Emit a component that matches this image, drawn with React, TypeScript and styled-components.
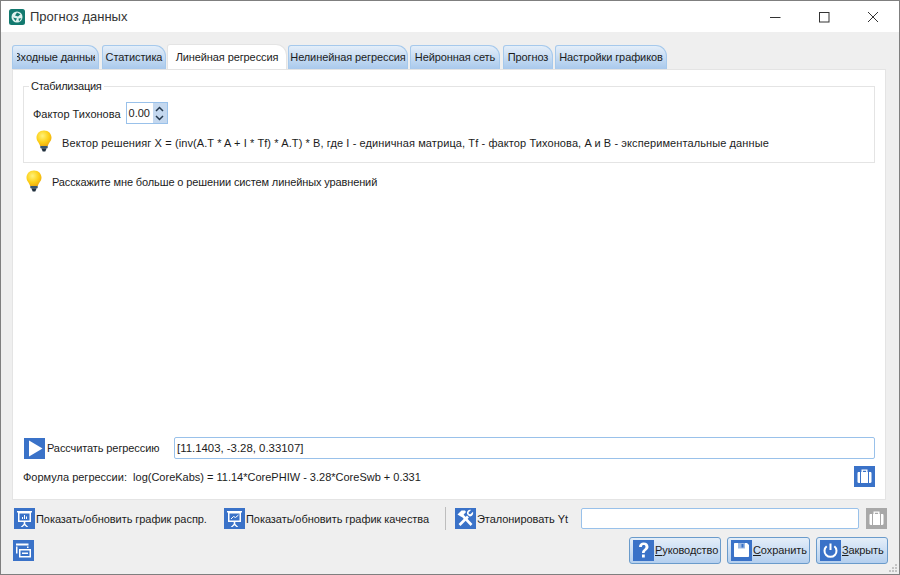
import styled, { createGlobalStyle } from 'styled-components';
import type { ReactNode } from 'react';

const GlobalStyle = createGlobalStyle`
  html, body {
    margin: 0;
    padding: 0;
    width: 900px;
    height: 575px;
    overflow: hidden;
  }
  * {
    box-sizing: border-box;
  }
`;

const tabs = [
  { text: 'Входные данные', width: 87, gap: 3, indent: -3, clip: true },
  { text: 'Статистика', width: 64, gap: 1 },
  { text: 'Линейная регрессия', width: 120, gap: 1, active: true },
  { text: 'Нелинейная регрессия', width: 120, gap: 2 },
  { text: 'Нейронная сеть', width: 90, gap: 3 },
  { text: 'Прогноз', width: 50, gap: 2 },
  { text: 'Настройки графиков', width: 112, gap: 0 },
];

function Bulb() {
  return (
    <svg width="18" height="22" viewBox="0 0 18 22">
      <defs>
        <radialGradient id="bulbFill" cx="0.4" cy="0.35" r="0.7">
          <stop offset="0" stopColor="#fff27a" />
          <stop offset="0.6" stopColor="#fdd017" />
          <stop offset="1" stopColor="#eda90c" />
        </radialGradient>
      </defs>
      <path d="M9 0.5C4.3 0.5 1.5 3.8 1.5 7.6c0 3.6 2.8 5.2 3.6 8.4h7.8c.8-3.2 3.6-4.8 3.6-8.4C16.5 3.8 13.700 0.5 9 0.5z" fill="url(#bulbFill)" />
      <path d="M5.300 16h7.400v2.200H5.300z" fill="#39556a" />
      <path d="M6.300 18.200h5.400L10.300 21.500H7.700z" fill="#1f2f3d" />
    </svg>
  );
}

function Tile({ children, gray }: { children: ReactNode; gray?: boolean }) {
  return (
    <IconTile $gray={gray}>
      <svg width="21" height="21" viewBox="0 0 21 21">
        {children}
      </svg>
    </IconTile>
  );
}

const Board = ({ inner }: { inner: ReactNode }) => (
  <Tile>
    <path d="M3 3h15v1.500h-1v9.500H4V4.500H3z" fill="#fff" />
    <path d="M5.500 5.500h10v7h-10z" fill="#3a72c8" />
    {inner}
    <path d="M9.700 14h1.600v2l3 3h-1.800l-2-1.800-2 1.800H6.700l3-3z" fill="#fff" />
  </Tile>
);

const Case = ({ gray }: { gray?: boolean }) => (
  <Tile gray={gray}>
    <path d="M7.500 6V3.500h6V6h-1.400V4.800H8.900V6z" fill="#fff" />
    <path d="M3.500 7.200c0-.7.500-1.200 1.200-1.200H6v11H4.700c-.7 0-1.200-.5-1.200-1.200zM7 6h7v11H7zM15 6h1.300c.7 0 1.200.5 1.200 1.200v8.600c0 .7-.5 1.200-1.200 1.200H15z" fill="#fff" />
  </Tile>
);

export default function App() {
  return (
    <Window>
      <GlobalStyle />
      <TitleBar>
        <AppLogo>
          <svg width="16" height="16" viewBox="0 0 16 16">
            <rect width="16" height="16" rx="2.500" fill="#12796f" />
            <circle cx="8" cy="8" r="5.500" fill="#dff2ee" />
            <path d="M8 3.500 6 6.500l3 1 2.500-2.200zM4 8.500l2.500 3.500 1.500-2.500zM9.500 9.500l.5 3 2.500-3.300z" fill="#12796f" />
          </svg>
        </AppLogo>
        <WindowTitle>Прогноз данных</WindowTitle>
        <WindowControls>
          <ControlSlot>
            <svg width="12" height="12" viewBox="0 0 12 12"><path d="M1 6.500h10.500" stroke="#333" fill="none" /></svg>
          </ControlSlot>
          <ControlSlot>
            <svg width="12" height="12" viewBox="0 0 12 12"><rect x="1.500" y="1.500" width="9.500" height="9.500" stroke="#333" fill="none" /></svg>
          </ControlSlot>
          <ControlSlot>
            <svg width="12" height="12" viewBox="0 0 12 12"><path d="M1 1l10 10M11 1 1 11" stroke="#333" fill="none" /></svg>
          </ControlSlot>
        </WindowControls>
      </TitleBar>

      <Body>
        <TabBar>
          {tabs.map((tab) => (
            <Tab key={tab.text} $width={tab.width} $gap={tab.gap} $active={tab.active}>
              <TabLabel $clip={tab.clip} $indent={tab.indent}>{tab.text}</TabLabel>
            </Tab>
          ))}
        </TabBar>

        <Pane>
          <GroupBox>
            <GroupTitle>Стабилизация</GroupTitle>
            <FactorRow>
              <FieldLabel>Фактор Тихонова</FieldLabel>
              <SpinBox>
                <SpinValue>0.00</SpinValue>
                <SpinButtons>
                  <svg width="9" height="6" viewBox="0 0 9 6"><path d="M1 5l3.500-3.500L8 5" stroke="#24384d" strokeWidth="1.500" fill="none" /></svg>
                  <svg width="9" height="6" viewBox="0 0 9 6"><path d="M1 1l3.500 3.500L8 1" stroke="#24384d" strokeWidth="1.500" fill="none" /></svg>
                </SpinButtons>
              </SpinBox>
            </FactorRow>
            <GroupHint>
              <Bulb />
              <VectorText>Вектор решенияг X = (inv(A.T * A + I * Tf) * A.T) * B, где I - единичная матрица, Tf - фактор Тихонова, A и B - экспериментальные данные</VectorText>
            </GroupHint>
          </GroupBox>

          <PaneHint>
            <Bulb />
            <PaneHintText>Расскажите мне больше о решении систем линейных уравнений</PaneHintText>
          </PaneHint>

          <RegressionRow>
            <Tile>
              <path d="M5 2.500 18.500 10.500 5 18.500z" fill="#fff" />
            </Tile>
            <RegressionLabel>Рассчитать регрессию</RegressionLabel>
            <TextField $height={22} defaultValue="[11.1403, -3.28, 0.33107]" />
          </RegressionRow>

          <FormulaRow>
            <span>Формула регрессии:&nbsp; log(CoreKabs) = 11.14*CorePHIW - 3.28*CoreSwb + 0.331</span>
            <Case />
          </FormulaRow>
        </Pane>

        <ActionRow>
          <ActionItem $width={210}>
            <Board inner={<path d="M8 11V9h1v2zM10 11V7h1v4zM12 11V8.500h1V11z" fill="#fff" />} />
            <ActionText>Показать/обновить график распр.</ActionText>
          </ActionItem>
          <ActionItem $width={221}>
            <Board inner={<path d="M7 11l2.500-2.500 2 1L14.500 7" stroke="#fff" fill="none" />} />
            <ActionText>Показать/обновить график качества</ActionText>
          </ActionItem>
          <Separator />
          <ActionItem $width={126}>
            <Tile>
              <path d="M6.500 6.500 16.500 17" stroke="#fff" strokeWidth="2.600" fill="none" />
              <path d="M2.500 6.500 6.500 2.500h3.500l1 1.500-4.500 5z" fill="#fff" />
              <path d="M4.500 17 13 8.500" stroke="#fff" strokeWidth="2.600" fill="none" />
              <path d="M18 3.800l-2.600 2.500-1.500-.4-.4-1.500 2.500-2.500c-2.500-.6-4.600 1.500-4 4.200l2.200 2.200c2.700.6 4.500-1.700 3.800-4.500z" fill="#fff" />
            </Tile>
            <ActionText>Эталонировать Yt</ActionText>
          </ActionItem>
          <TextField $height={21} />
          <GrayCaseSlot>
            <Case gray />
          </GrayCaseSlot>
        </ActionRow>

        <FooterRow>
          <Tile>
            <path d="M3 3.500h12.500v2H3zM3 6.500h1.500v7H3zM14 6.500h1.500v1.500H14z" fill="#fff" />
            <path d="M6 9h12v8.500H6z" fill="#fff" />
            <path d="M7.500 10.500h9v5.500h-9z" fill="#3a72c8" />
            <path d="M9 12.500h6v1.500H9z" fill="#fff" />
          </Tile>
          <FooterButtons>
            <PushButton $width={92} $gap={6}>
              <Tile>
                <path d="M6 7c0-3 2-4.500 4.700-4.500S15.500 4 15.500 6.700c0 3.500-3.800 3.500-3.800 6.300H9c0-3.700 3.500-3.700 3.500-6.200 0-1-.7-1.700-1.800-1.700S8.900 5.700 8.900 7zM9 14.500h2.800v3H9z" fill="#fff" />
              </Tile>
              <ButtonText><u>Р</u>уководство</ButtonText>
            </PushButton>
            <PushButton $width={83} $gap={6}>
              <Tile>
                <path d="M3 4c0-.6.400-1 1-1h12l2 2v11c0 .6-.4 1-1 1H4c-.6 0-1-.4-1-1z" fill="#fff" />
                <path d="M7 3h7v5.500H7z" fill="#9cb9e4" />
                <path d="M10.500 4h2v3.500h-2z" fill="#3a72c8" />
              </Tile>
              <ButtonText><u>С</u>охранить</ButtonText>
            </PushButton>
            <PushButton $width={72} $gap={0}>
              <Tile>
                <path d="M6.700 6.200a6 6 0 1 0 7.600 0" stroke="#fff" strokeWidth="2" fill="none" />
                <path d="M10.500 3.500v6.500" stroke="#fff" strokeWidth="2" fill="none" />
              </Tile>
              <ButtonText><u>З</u>акрыть</ButtonText>
            </PushButton>
          </FooterButtons>
        </FooterRow>

        <SizeGrip>
          <svg width="10" height="10" viewBox="0 0 10 10">
            <path d="M7 0h2v2H7zM4 3h2v2H4zM7 3h2v2H7zM1 6h2v2H1zM4 6h2v2H4zM7 6h2v2H7z" fill="#c4c4c4" />
          </svg>
        </SizeGrip>
      </Body>
    </Window>
  );
}

const Window = styled.div`
  display: flex;
  flex-direction: column;
  width: 900px;
  height: 575px;
  border: 1px solid #7f7f7f;
  background: #efefef;
  font-family: 'Liberation Sans', Arial, sans-serif;
  font-size: 11px;
  color: #1c1c1c;
`;

const TitleBar = styled.div`
  display: flex;
  align-items: center;
  flex: none;
  height: 31px;
  padding-left: 8px;
  background: #fff;
`;

const AppLogo = styled.div`
  display: flex;
  margin-right: 5px;
`;

const WindowTitle = styled.span`
  font-size: 13px;
  color: #333;
`;

const WindowControls = styled.div`
  display: flex;
  margin-left: auto;
  margin-right: 2px;
`;

const ControlSlot = styled.div`
  display: flex;
  align-items: center;
  justify-content: center;
  width: 49px;
  height: 31px;
`;

const Body = styled.div`
  position: relative;
  display: flex;
  flex-direction: column;
  flex: 1;
  min-height: 0;
  padding: 12px 11px 0;
`;

const TabBar = styled.div`
  display: flex;
  align-items: flex-end;
  flex: none;
  height: 25px;
`;

const Tab = styled.div<{ $width: number; $gap: number; $active?: boolean }>`
  display: flex;
  align-items: center;
  justify-content: center;
  flex: none;
  width: ${(p) => p.$width}px;
  height: ${(p) => (p.$active ? 25 : 24)}px;
  margin-right: ${(p) => p.$gap}px;
  padding-bottom: 1px;
  border: 1px solid ${(p) => (p.$active ? '#e4e4e4' : '#a6c9ec')};
  border-bottom: none;
  border-radius: 3px 11px 0 0;
  background: ${(p) => (p.$active ? '#fff' : 'linear-gradient(#e4eef9, #a9c9ec)')};
  white-space: nowrap;
  letter-spacing: -0.1px;
`;

const TabLabel = styled.span<{ $clip?: boolean; $indent?: number }>`
  display: block;
  overflow: ${(p) => (p.$clip ? 'hidden' : 'visible')};
  width: ${(p) => (p.$clip ? '78px' : 'auto')};
  text-indent: ${(p) => p.$indent ?? 0}px;
`;

const Pane = styled.div`
  display: flex;
  flex-direction: column;
  flex: none;
  width: 874px;
  height: 431px;
  padding: 16px 10px 0;
  border: 1px solid #e4e4e4;
  background: #fff;
`;

const GroupBox = styled.div`
  position: relative;
  flex: none;
  height: 77px;
  padding: 15px 0 0 9px;
  border: 1px solid #e4e4e4;
`;

const GroupTitle = styled.span`
  position: absolute;
  top: -7px;
  left: 5px;
  padding: 0 2px;
  background: #fff;
  letter-spacing: -0.25px;
`;

const FactorRow = styled.div`
  display: flex;
  align-items: center;
  gap: 5px;
  height: 22px;
`;

const FieldLabel = styled.span`
  padding-top: 1px;
`;

const SpinBox = styled.div`
  display: flex;
  width: 42px;
  height: 22px;
  border: 1px solid #99c1ea;
`;

const SpinValue = styled.span`
  display: flex;
  align-items: center;
  flex: 1;
  padding-left: 2px;
`;

const SpinButtons = styled.div`
  display: flex;
  flex-direction: column;
  align-items: center;
  justify-content: center;
  gap: 3px;
  width: 14px;
  background: #c4d8ef;
`;

const GroupHint = styled.div`
  display: flex;
  align-items: center;
  gap: 9px;
  height: 22px;
  margin-top: 6px;
  padding-left: 2px;
`;

const VectorText = styled.span`
  padding-top: 3px;
  letter-spacing: 0.1px;
`;

const PaneHint = styled.div`
  display: flex;
  align-items: center;
  gap: 9px;
  flex: none;
  height: 22px;
  margin-top: 7px;
  padding-left: 2px;
`;

const PaneHintText = styled.span`
  padding-top: 1px;
  letter-spacing: -0.12px;
`;

const IconTile = styled.div<{ $gray?: boolean }>`
  display: flex;
  flex: none;
  width: 21px;
  height: 21px;
  background: ${(p) => (p.$gray ? '#a8a8a8' : '#3a72c8')};
`;

const RegressionRow = styled.div`
  display: flex;
  align-items: center;
  flex: none;
  height: 22px;
  margin-top: auto;
  padding-left: 1px;
`;

const RegressionLabel = styled.span`
  flex: none;
  width: 129px;
  padding-left: 2px;
  letter-spacing: -0.1px;
`;

const TextField = styled.input<{ $height: number }>`
  flex: 1;
  min-width: 0;
  height: ${(p) => p.$height}px;
  padding: 0 2px;
  border: 1px solid #99c1ea;
  border-radius: 2px;
  outline: none;
  background: #fff;
  font: inherit;
  font-size: 11.4px;
  color: #1c1c1c;
`;

const FormulaRow = styled.div`
  display: flex;
  align-items: center;
  justify-content: space-between;
  flex: none;
  height: 21px;
  margin: 7px 0 12px;
`;

const ActionRow = styled.div`
  display: flex;
  align-items: center;
  flex: none;
  height: 23px;
  margin-top: 7px;
  padding: 0 1px 0 2px;
`;

const ActionItem = styled.div<{ $width: number }>`
  display: flex;
  align-items: center;
  gap: 1px;
  flex: none;
  width: ${(p) => p.$width}px;
`;

const ActionText = styled.span`
  padding-top: 1px;
  letter-spacing: -0.05px;
  white-space: nowrap;
`;

const GrayCaseSlot = styled.div`
  display: flex;
  flex: none;
  margin-left: 7px;
`;

const Separator = styled.div`
  flex: none;
  width: 1px;
  height: 23px;
  margin-right: 9px;
  background: #bdbdbd;
`;

const FooterRow = styled.div`
  display: flex;
  align-items: center;
  justify-content: space-between;
  flex: none;
  height: 28px;
  margin-top: 6px;
  padding-left: 1px;
`;

const FooterButtons = styled.div`
  display: flex;
`;

const PushButton = styled.div<{ $width: number; $gap: number }>`
  display: flex;
  align-items: center;
  gap: 1px;
  flex: none;
  width: ${(p) => p.$width}px;
  height: 27px;
  margin-right: ${(p) => p.$gap}px;
  padding-left: 3px;
  border: 1px solid #6a9bcb;
  border-radius: 3px;
  background: linear-gradient(#e4eef9, #b4cfee);
`;

const ButtonText = styled.span`
  white-space: nowrap;
  letter-spacing: -0.1px;
`;

const SizeGrip = styled.div`
  position: absolute;
  right: 1px;
  bottom: 0;
  display: flex;
`;
